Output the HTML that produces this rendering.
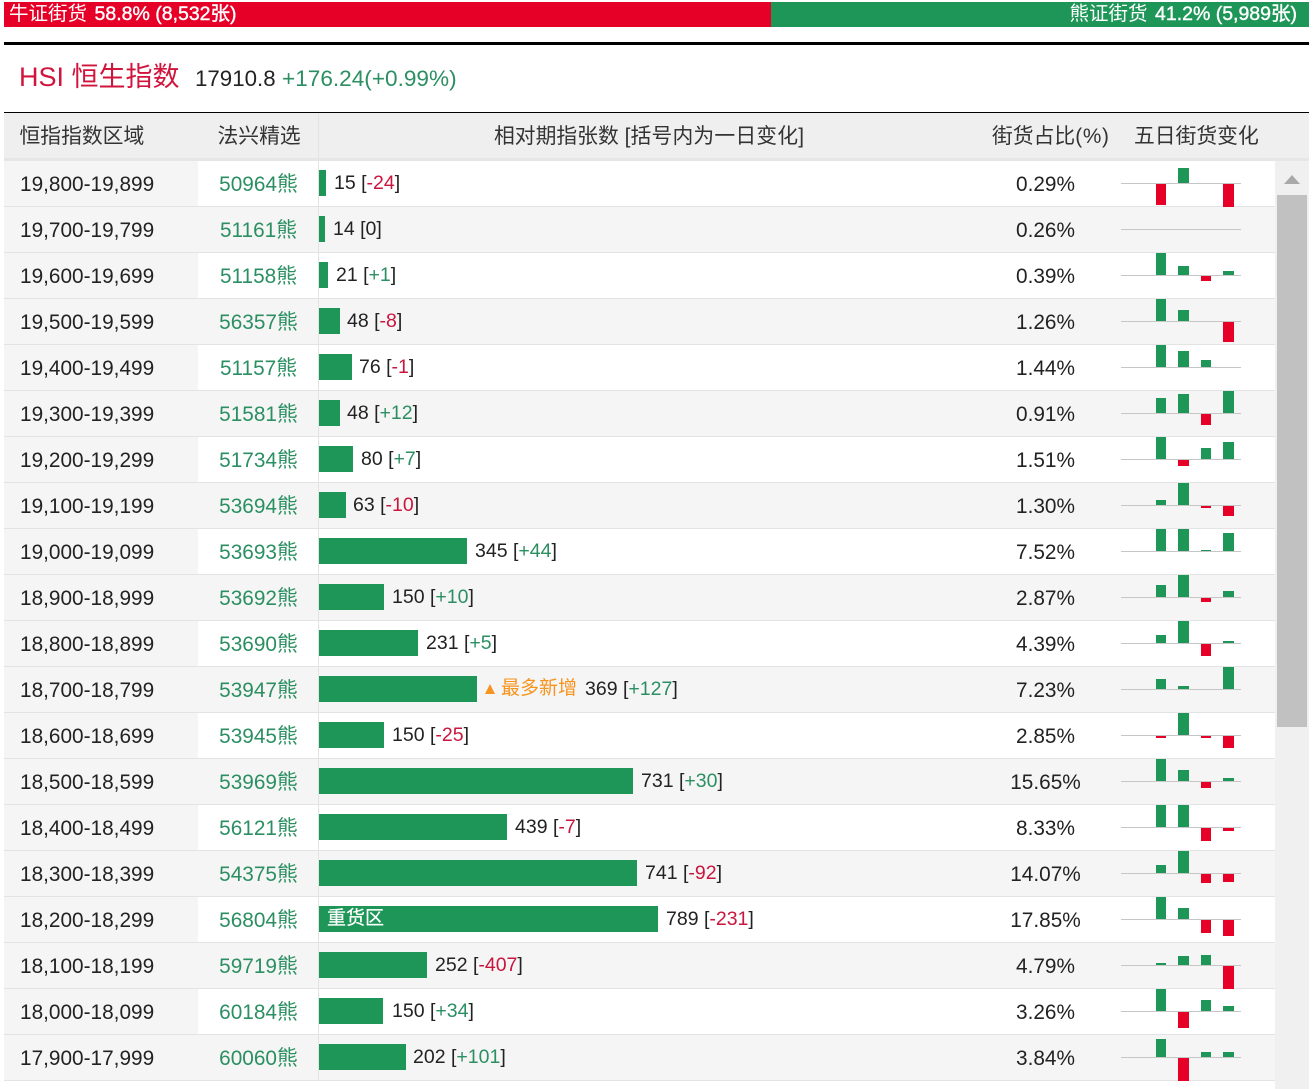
<!DOCTYPE html>
<html lang="zh-CN">
<head>
<meta charset="utf-8">
<title>恒生指数</title>
<style>
html,body{margin:0;padding:0;width:1313px;height:1089px;overflow:hidden;background:#fff}
body{position:relative;font-family:"Liberation Sans","Noto Sans CJK SC",sans-serif;font-size:20.8px;color:#222;filter:blur(.3px)}
div,span{position:absolute;white-space:nowrap}
s{text-decoration:none;color:#c9163e}
u{text-decoration:none;color:#2b8f62}
em{font-style:normal}
.row{left:4px;width:1271px;height:45px;border-bottom:1px solid #e3e3e3;line-height:48px;background:#fff}
.e{background:#f5f5f5}
.row::before{content:"";position:absolute;left:0;top:0;width:194px;height:45px;background:#f5f5f5}
.row::after{content:"";position:absolute;left:314px;top:0;width:1px;height:45px;background:#e3e3e3}
.a{left:16px}
.b{left:194.5px;width:120px;text-align:center;color:#2b8f62}
.p{left:941.5px;width:200px;text-align:center}
.bar{left:315px;top:9px;height:26px;background:#1d9658}
.l{top:-2px;font-size:19.5px}
.h{top:113px;height:45px;line-height:47px;color:#333}
svg{position:absolute;left:0;top:0}
.g{fill:#1d9658}.r{fill:#e60027}.z{fill:#c6c6c6}
</style>
</head>
<body>
<div style="left:4px;top:2px;width:767px;height:25px;background:#e60027"></div>
<div style="left:771px;top:2px;width:538px;height:25px;background:#1d9658"></div>
<div style="left:9px;top:2px;line-height:24px;color:#fff;font-size:19.5px">牛证街货<b style="font-weight:normal;-webkit-text-stroke:.4px #fff;margin-left:7.5px">58.8% (8,532张)</b></div>
<div style="right:16px;top:2px;line-height:24px;color:#fff;font-size:19.5px">熊证街货<b style="font-weight:normal;-webkit-text-stroke:.4px #fff;margin-left:7.5px">41.2% (5,989张)</b></div>
<div style="left:4px;top:42px;width:1305px;height:3px;background:#000"></div>

<div style="left:19px;top:59px;line-height:36px;font-size:27px;color:#d0143c">HSI 恒生指数</div>
<div style="left:195px;top:61px;line-height:36px;font-size:22.3px;color:#222">17910.8</div>
<div style="left:282px;top:61px;line-height:36px;font-size:22.6px;color:#2b8f62">+176.24(+0.99%)</div>

<div style="left:4px;top:112px;width:1305px;height:1px;background:#000"></div>
<div style="left:4px;top:113px;width:1305px;height:45px;background:#efefef"></div>
<div style="left:4px;top:158px;width:1305px;height:3px;background:#e6e6e6"></div>
<div style="left:318px;top:113px;width:1px;height:45px;background:#e3e3e3"></div>
<div class="h" style="left:19.5px">恒指指数区域</div>
<div class="h" style="left:217.5px">法兴精选</div>
<div class="h" style="left:494px">相对期指张数 <em style="letter-spacing:.17px">[括号内为一日变化]</em></div>
<div class="h" style="left:992px">街货占比<em style="letter-spacing:.7px">(%)</em></div>
<div class="h" style="left:1134px">五日街货变化</div>

<div style="left:1275px;top:161px;width:34px;height:928px;background:#f0f0f0"></div>
<div style="left:1284px;top:175px;width:0;height:0;border-left:8px solid transparent;border-right:8px solid transparent;border-bottom:9px solid #a9a9a9"></div>
<div style="left:1277px;top:195px;width:30px;height:532px;background:#c1c1c1"></div>

<div class="row" style="top:161px"><span class="a">19,800-19,899</span><span class="b">50964熊</span><div class="bar" style="width:7px"></div><span class="l" style="left:330px">15 [<s>-24</s>]</span><span class="p">0.29%</span></div>
<div class="row e" style="top:207px"><span class="a">19,700-19,799</span><span class="b">51161熊</span><div class="bar" style="width:6px"></div><span class="l" style="left:329px">14 [0]</span><span class="p">0.26%</span></div>
<div class="row" style="top:253px"><span class="a">19,600-19,699</span><span class="b">51158熊</span><div class="bar" style="width:9px"></div><span class="l" style="left:332px">21 [<u>+1</u>]</span><span class="p">0.39%</span></div>
<div class="row e" style="top:299px"><span class="a">19,500-19,599</span><span class="b">56357熊</span><div class="bar" style="width:21px"></div><span class="l" style="left:343px">48 [<s>-8</s>]</span><span class="p">1.26%</span></div>
<div class="row" style="top:345px"><span class="a">19,400-19,499</span><span class="b">51157熊</span><div class="bar" style="width:33px"></div><span class="l" style="left:355px">76 [<s>-1</s>]</span><span class="p">1.44%</span></div>
<div class="row e" style="top:391px"><span class="a">19,300-19,399</span><span class="b">51581熊</span><div class="bar" style="width:21px"></div><span class="l" style="left:343px">48 [<u>+12</u>]</span><span class="p">0.91%</span></div>
<div class="row" style="top:437px"><span class="a">19,200-19,299</span><span class="b">51734熊</span><div class="bar" style="width:34px"></div><span class="l" style="left:357px">80 [<u>+7</u>]</span><span class="p">1.51%</span></div>
<div class="row e" style="top:483px"><span class="a">19,100-19,199</span><span class="b">53694熊</span><div class="bar" style="width:27px"></div><span class="l" style="left:349px">63 [<s>-10</s>]</span><span class="p">1.30%</span></div>
<div class="row" style="top:529px"><span class="a">19,000-19,099</span><span class="b">53693熊</span><div class="bar" style="width:148px"></div><span class="l" style="left:471px">345 [<u>+44</u>]</span><span class="p">7.52%</span></div>
<div class="row e" style="top:575px"><span class="a">18,900-18,999</span><span class="b">53692熊</span><div class="bar" style="width:65px"></div><span class="l" style="left:388px">150 [<u>+10</u>]</span><span class="p">2.87%</span></div>
<div class="row" style="top:621px"><span class="a">18,800-18,899</span><span class="b">53690熊</span><div class="bar" style="width:99px"></div><span class="l" style="left:422px">231 [<u>+5</u>]</span><span class="p">4.39%</span></div>
<div class="row e" style="top:667px"><span class="a">18,700-18,799</span><span class="b">53947熊</span><div class="bar" style="width:158px"></div><div style="left:481px;top:17px;width:0;height:0;border-left:5.5px solid transparent;border-right:5.5px solid transparent;border-bottom:10px solid #f7941d"></div><span class="l" style="left:497px;font-size:19px;color:#f7941d">最多新增</span><span class="l" style="left:581px">369 [<u>+127</u>]</span><span class="p">7.23%</span></div>
<div class="row" style="top:713px"><span class="a">18,600-18,699</span><span class="b">53945熊</span><div class="bar" style="width:65px"></div><span class="l" style="left:388px">150 [<s>-25</s>]</span><span class="p">2.85%</span></div>
<div class="row e" style="top:759px"><span class="a">18,500-18,599</span><span class="b">53969熊</span><div class="bar" style="width:314px"></div><span class="l" style="left:637px">731 [<u>+30</u>]</span><span class="p">15.65%</span></div>
<div class="row" style="top:805px"><span class="a">18,400-18,499</span><span class="b">56121熊</span><div class="bar" style="width:188px"></div><span class="l" style="left:511px">439 [<s>-7</s>]</span><span class="p">8.33%</span></div>
<div class="row e" style="top:851px"><span class="a">18,300-18,399</span><span class="b">54375熊</span><div class="bar" style="width:318px"></div><span class="l" style="left:641px">741 [<s>-92</s>]</span><span class="p">14.07%</span></div>
<div class="row" style="top:897px"><span class="a">18,200-18,299</span><span class="b">56804熊</span><div class="bar" style="width:339px;line-height:25px;color:#fff;font-size:19px;text-indent:8px;-webkit-text-stroke:.2px #fff">重货区</div><span class="l" style="left:662px">789 [<s>-231</s>]</span><span class="p">17.85%</span></div>
<div class="row e" style="top:943px"><span class="a">18,100-18,199</span><span class="b">59719熊</span><div class="bar" style="width:108px"></div><span class="l" style="left:431px">252 [<s>-407</s>]</span><span class="p">4.79%</span></div>
<div class="row" style="top:989px"><span class="a">18,000-18,099</span><span class="b">60184熊</span><div class="bar" style="width:64px"></div><span class="l" style="left:388px">150 [<u>+34</u>]</span><span class="p">3.26%</span></div>
<div class="row e" style="top:1035px"><span class="a">17,900-17,999</span><span class="b">60060熊</span><div class="bar" style="width:87px"></div><span class="l" style="left:409px">202 [<u>+101</u>]</span><span class="p">3.84%</span></div>

<svg width="1313" height="1089" viewBox="0 0 1313 1089">
<g transform="translate(0,183)"><rect class="z" x="1121" y="0" width="120" height="1"/><rect class="r" x="1156" y="1" width="10" height="21"/><rect class="g" x="1178" y="-15" width="11" height="15"/><rect class="r" x="1223" y="1" width="11" height="23"/></g>
<g transform="translate(0,229)"><rect class="z" x="1121" y="0" width="120" height="1"/></g>
<g transform="translate(0,275)"><rect class="z" x="1121" y="0" width="120" height="1"/><rect class="g" x="1156" y="-22" width="10" height="22"/><rect class="g" x="1178" y="-9" width="11" height="9"/><rect class="r" x="1201" y="1" width="10" height="5"/><rect class="g" x="1223" y="-4" width="11" height="4"/></g>
<g transform="translate(0,321)"><rect class="z" x="1121" y="0" width="120" height="1"/><rect class="g" x="1156" y="-22" width="10" height="22"/><rect class="g" x="1178" y="-11" width="11" height="11"/><rect class="r" x="1223" y="1" width="11" height="20"/></g>
<g transform="translate(0,367)"><rect class="z" x="1121" y="0" width="120" height="1"/><rect class="g" x="1156" y="-22" width="10" height="22"/><rect class="g" x="1178" y="-16" width="11" height="16"/><rect class="g" x="1201" y="-7" width="10" height="7"/></g>
<g transform="translate(0,413)"><rect class="z" x="1121" y="0" width="120" height="1"/><rect class="g" x="1156" y="-15" width="10" height="15"/><rect class="g" x="1178" y="-19" width="11" height="19"/><rect class="r" x="1201" y="1" width="10" height="11"/><rect class="g" x="1223" y="-22" width="11" height="22"/></g>
<g transform="translate(0,459)"><rect class="z" x="1121" y="0" width="120" height="1"/><rect class="g" x="1156" y="-22" width="10" height="22"/><rect class="r" x="1178" y="1" width="11" height="6"/><rect class="g" x="1201" y="-11" width="10" height="11"/><rect class="g" x="1223" y="-17" width="11" height="17"/></g>
<g transform="translate(0,505)"><rect class="z" x="1121" y="0" width="120" height="1"/><rect class="g" x="1156" y="-5" width="10" height="5"/><rect class="g" x="1178" y="-22" width="11" height="22"/><rect class="r" x="1201" y="1" width="10" height="2"/><rect class="r" x="1223" y="1" width="11" height="10"/></g>
<g transform="translate(0,551)"><rect class="z" x="1121" y="0" width="120" height="1"/><rect class="g" x="1156" y="-22" width="10" height="22"/><rect class="g" x="1178" y="-22" width="11" height="22"/><rect class="g" x="1201" y="-1" width="10" height="1"/><rect class="g" x="1223" y="-18" width="11" height="18"/></g>
<g transform="translate(0,597)"><rect class="z" x="1121" y="0" width="120" height="1"/><rect class="g" x="1156" y="-12" width="10" height="12"/><rect class="g" x="1178" y="-22" width="11" height="22"/><rect class="r" x="1201" y="1" width="10" height="4"/><rect class="g" x="1223" y="-6" width="11" height="6"/></g>
<g transform="translate(0,643)"><rect class="z" x="1121" y="0" width="120" height="1"/><rect class="g" x="1156" y="-8" width="10" height="8"/><rect class="g" x="1178" y="-22" width="11" height="22"/><rect class="r" x="1201" y="1" width="10" height="12"/><rect class="g" x="1223" y="-2" width="11" height="2"/></g>
<g transform="translate(0,689)"><rect class="z" x="1121" y="0" width="120" height="1"/><rect class="g" x="1156" y="-10" width="10" height="10"/><rect class="g" x="1178" y="-3" width="11" height="3"/><rect class="g" x="1223" y="-22" width="11" height="22"/></g>
<g transform="translate(0,735)"><rect class="z" x="1121" y="0" width="120" height="1"/><rect class="r" x="1156" y="1" width="10" height="2"/><rect class="g" x="1178" y="-22" width="11" height="22"/><rect class="r" x="1201" y="1" width="10" height="2"/><rect class="r" x="1223" y="1" width="11" height="12"/></g>
<g transform="translate(0,781)"><rect class="z" x="1121" y="0" width="120" height="1"/><rect class="g" x="1156" y="-22" width="10" height="22"/><rect class="g" x="1178" y="-11" width="11" height="11"/><rect class="r" x="1201" y="1" width="10" height="6"/><rect class="g" x="1223" y="-3" width="11" height="3"/></g>
<g transform="translate(0,827)"><rect class="z" x="1121" y="0" width="120" height="1"/><rect class="g" x="1156" y="-22" width="10" height="22"/><rect class="g" x="1178" y="-22" width="11" height="22"/><rect class="r" x="1201" y="1" width="10" height="13"/><rect class="r" x="1223" y="1" width="11" height="3"/></g>
<g transform="translate(0,873)"><rect class="z" x="1121" y="0" width="120" height="1"/><rect class="g" x="1156" y="-8" width="10" height="8"/><rect class="g" x="1178" y="-22" width="11" height="22"/><rect class="r" x="1201" y="1" width="10" height="9"/><rect class="r" x="1223" y="1" width="11" height="8"/></g>
<g transform="translate(0,919)"><rect class="z" x="1121" y="0" width="120" height="1"/><rect class="g" x="1156" y="-22" width="10" height="22"/><rect class="g" x="1178" y="-11" width="11" height="11"/><rect class="r" x="1201" y="1" width="10" height="13"/><rect class="r" x="1223" y="1" width="11" height="16"/></g>
<g transform="translate(0,965)"><rect class="z" x="1121" y="0" width="120" height="1"/><rect class="g" x="1156" y="-2" width="10" height="2"/><rect class="g" x="1178" y="-9" width="11" height="9"/><rect class="g" x="1201" y="-10" width="10" height="10"/><rect class="r" x="1223" y="1" width="11" height="23"/></g>
<g transform="translate(0,1011)"><rect class="z" x="1121" y="0" width="120" height="1"/><rect class="g" x="1156" y="-22" width="10" height="22"/><rect class="r" x="1178" y="1" width="11" height="16"/><rect class="g" x="1201" y="-11" width="10" height="11"/><rect class="g" x="1223" y="-5" width="11" height="5"/></g>
<g transform="translate(0,1057)"><rect class="z" x="1121" y="0" width="120" height="1"/><rect class="g" x="1156" y="-18" width="10" height="18"/><rect class="r" x="1178" y="1" width="11" height="23"/><rect class="g" x="1201" y="-5" width="10" height="5"/><rect class="g" x="1223" y="-5" width="11" height="5"/></g>
</svg>
</body>
</html>
